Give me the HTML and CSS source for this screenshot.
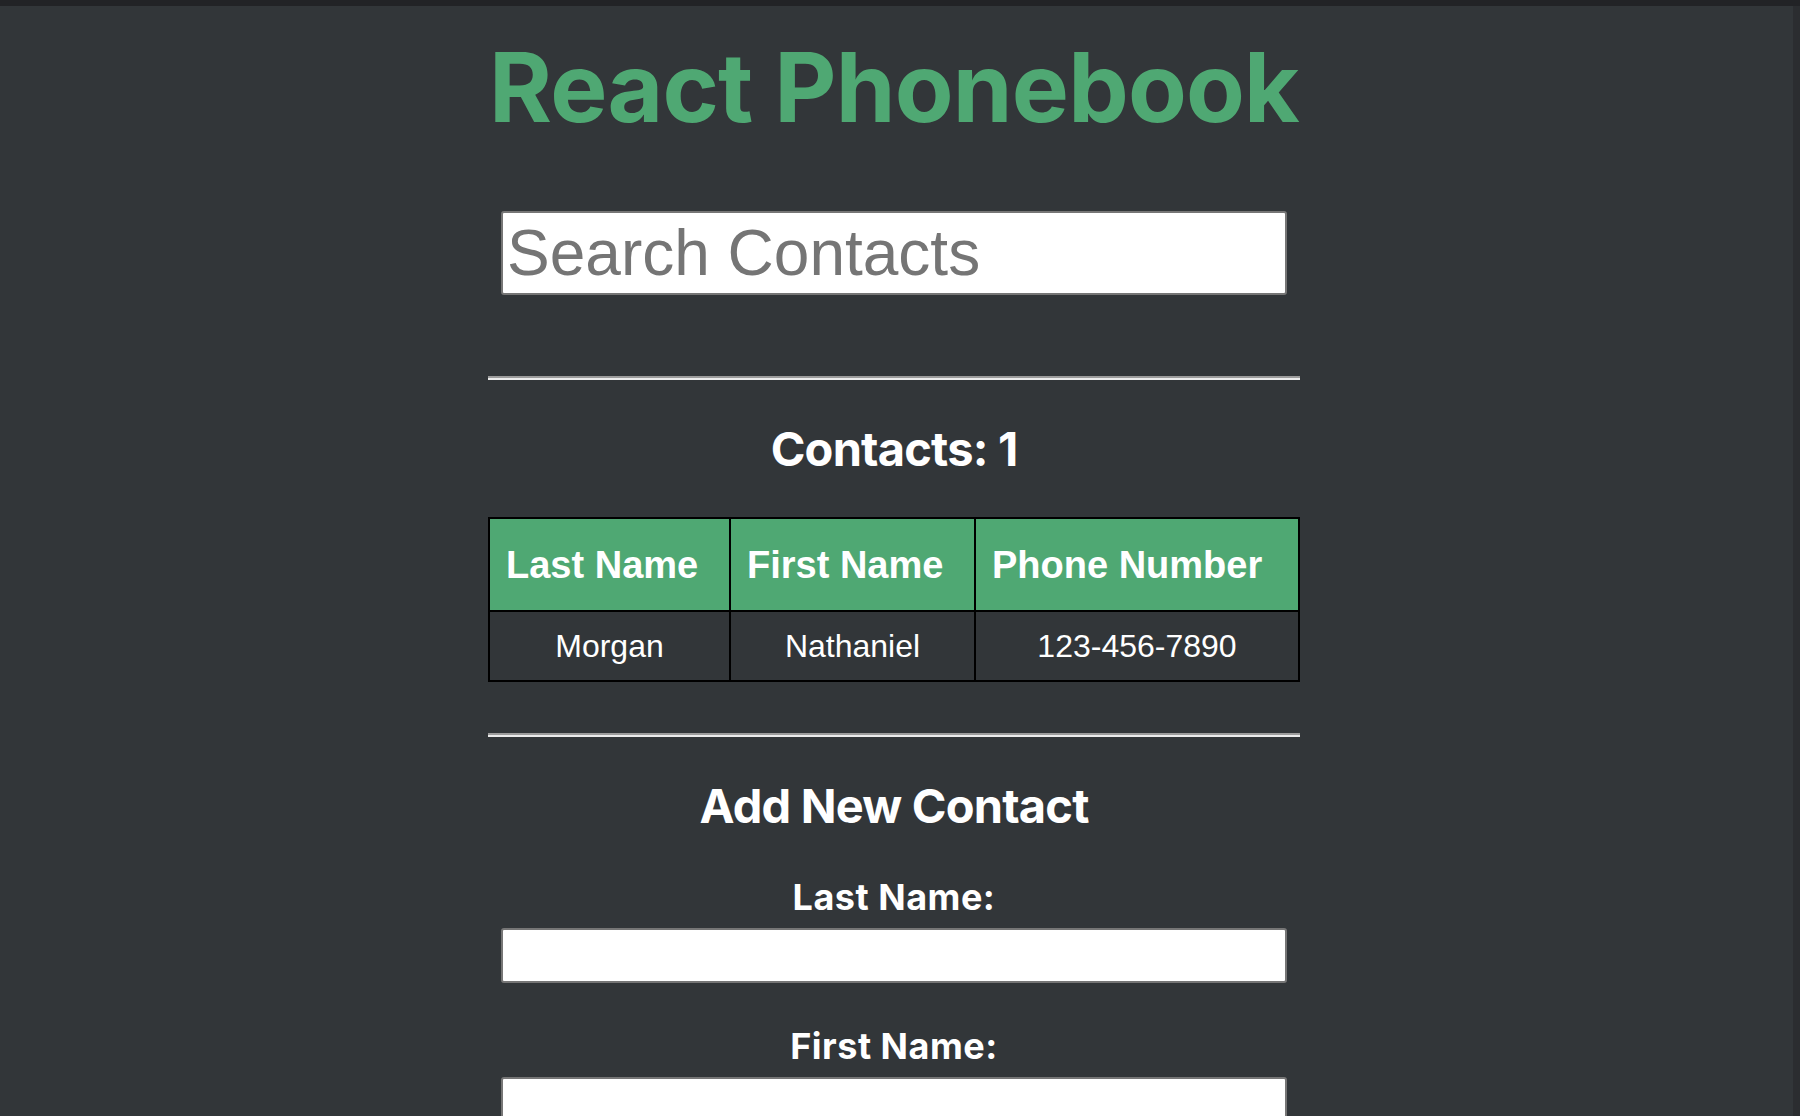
FILE: index.html
```html
<!DOCTYPE html>
<html lang="en">
<head>
<meta charset="utf-8">
<title>React Phonebook</title>
<link rel="stylesheet" href="styles.css">
</head>
<body>
<div class="topbar"></div>
<div class="frame">
  <main class="page">
    <div class="app">
      <h1 class="title">React Phonebook</h1>
      <input class="search" type="text" placeholder="Search Contacts">
      <hr class="rule rule-first">
      <h2 class="section-title">Contacts: 1</h2>
      <table class="contacts">
        <colgroup>
          <col class="col-last">
          <col class="col-first">
          <col class="col-phone">
        </colgroup>
        <thead>
          <tr>
            <th>Last Name</th>
            <th>First Name</th>
            <th>Phone Number</th>
          </tr>
        </thead>
        <tbody>
          <tr>
            <td>Morgan</td>
            <td>Nathaniel</td>
            <td>123-456-7890</td>
          </tr>
        </tbody>
      </table>
      <hr class="rule rule-second">
      <h2 class="section-title">Add New Contact</h2>
      <form class="add-form">
        <div class="field">
          <label class="field-label" for="lastName">Last Name:</label>
          <input class="field-input" id="lastName" type="text">
        </div>
        <div class="field">
          <label class="field-label" for="firstName">First Name:</label>
          <input class="field-input" id="firstName" type="text">
        </div>
        <div class="field">
          <label class="field-label" for="phone">Phone Number:</label>
          <input class="field-input" id="phone" type="text">
        </div>
        <button class="submit" type="button">Add Contact</button>
      </form>
    </div>
  </main>
  <div class="scroll-strip"></div>
</div>
</body>
</html>
```

FILE: styles.css
```css
html, body {
  margin: 0;
  padding: 0;
  height: 100%;
  overflow: hidden;
}

body {
  background: #323639;
  color: #ffffff;
  font-family: Inter, "Noto Sans", sans-serif;
}

.topbar {
  height: 6px;
  background: #222326;
}

.frame {
  display: flex;
  height: calc(100% - 6px);
}

.page {
  flex: 1;
  min-width: 0;
}

.scroll-strip {
  width: 12px;
  background: linear-gradient(to right, #323639 5px, #2b2d30 5px);
}

.app {
  width: 812px;
  margin: 0 auto;
  display: flex;
  flex-direction: column;
  text-align: center;
}

.title {
  margin: 23px 0 0;
  font-size: 96px;
  line-height: 116px;
  font-weight: 700;
  color: #4fa873;
  letter-spacing: -0.8px;
  white-space: nowrap;
}

.search {
  box-sizing: border-box;
  width: 786px;
  height: 84px;
  margin: 66px auto 0;
  padding: 0 4px;
  border: 2px solid #767676;
  border-radius: 3px;
  background: #ffffff;
  font-family: "Liberation Sans", Arial, sans-serif;
  font-size: 64px;
  color: #000;
}

.search::placeholder {
  color: #757575;
}

.rule {
  height: 0;
  margin: 0;
  border: none;
  border-top: 2px solid #9c9c9c;
  border-bottom: 2px solid #ececec;
}

.rule-first {
  margin-top: 81px;
}

.rule-second {
  margin-top: 51px;
}

.section-title {
  margin: 40px 0 0;
  font-size: 47px;
  line-height: 58px;
  font-weight: 700;
  letter-spacing: -0.8px;
}

.contacts {
  margin-top: 39px;
  width: 810px;
  table-layout: fixed;
  border-collapse: collapse;
  border: 2px solid #000;
  font-family: "Liberation Sans", Arial, sans-serif;
  color: #ffffff;
}

.col-last { width: 241px; }
.col-first { width: 245px; }
.col-phone { width: 324px; }

.contacts th,
.contacts td {
  border: 2px solid #000;
}

.contacts th {
  background: #4fa873;
  font-size: 38px;
  font-weight: 700;
  line-height: 44px;
  padding: 24px 8px 23px 16px;
  text-align: left;
  white-space: nowrap;
}

.contacts td {
  font-size: 32px;
  line-height: 36px;
  padding: 16px 8px;
  text-align: center;
}

.add-form {
  margin-top: 40px;
  display: flex;
  flex-direction: column;
}

.field {
  display: flex;
  flex-direction: column;
  margin-bottom: 41px;
}

.field-label {
  font-size: 36px;
  line-height: 44px;
  font-weight: 700;
  letter-spacing: 0.5px;
  margin-bottom: 9px;
}

.field-input {
  box-sizing: border-box;
  width: 786px;
  height: 55px;
  margin: 0 auto;
  border: 2px solid #767676;
  border-radius: 3px;
  background: #ffffff;
  font-family: "Liberation Sans", Arial, sans-serif;
  font-size: 32px;
}

.submit {
  align-self: center;
  font-size: 32px;
  padding: 8px 20px;
}
```
